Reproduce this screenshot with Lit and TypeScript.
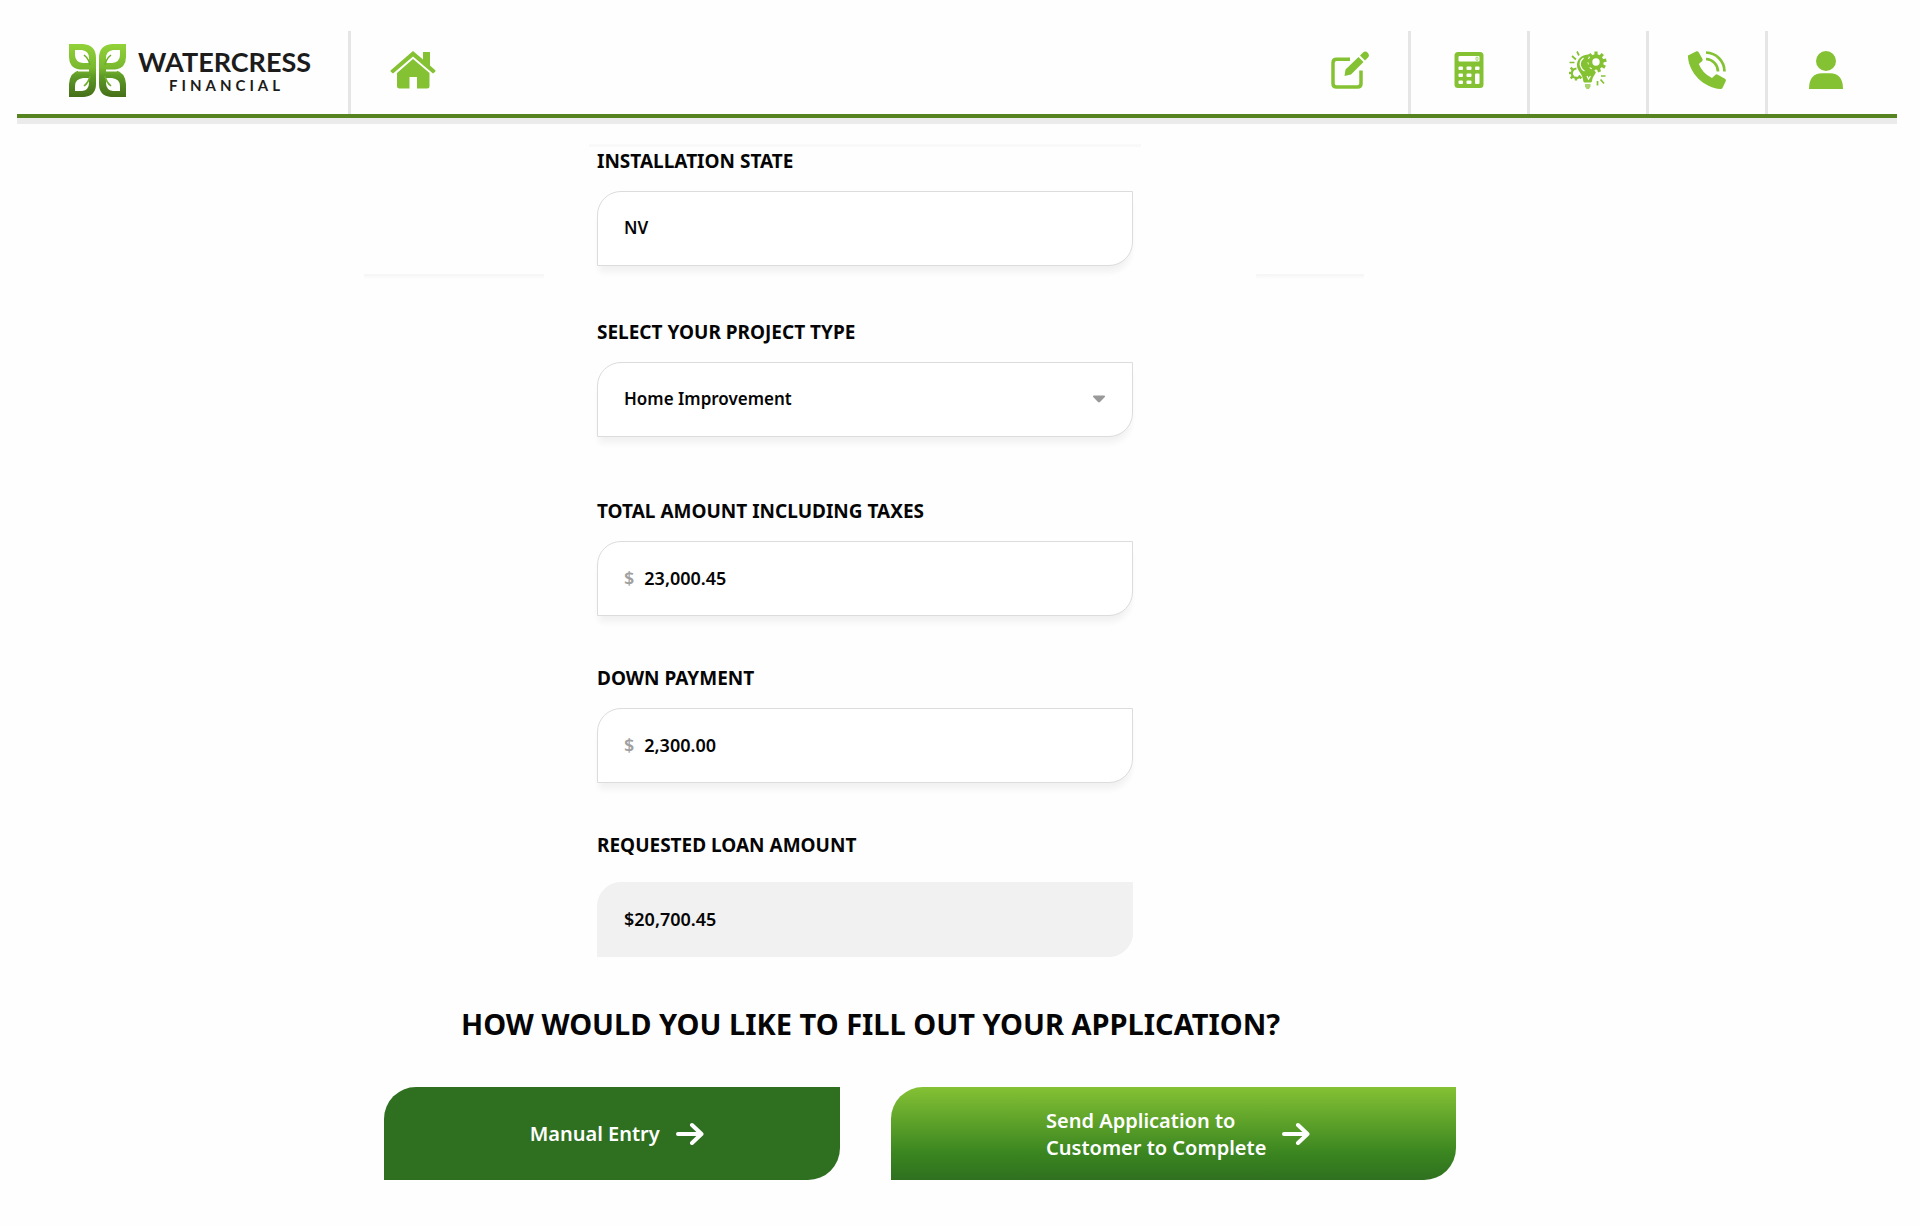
import { LitElement, html, css, svg } from "lit";
import { customElement, state } from "lit/decorators.js";

const gearTeeth = (cx: number, cy: number, r: number, w: number, count: number) =>
  Array.from({ length: count }, (_, i) => svg`
    <rect x=${cx - w / 2} y=${cy - r} width=${w} height=${r / 2}
      transform="rotate(${(360 / count) * i} ${cx} ${cy})" />`);

const logoMark = html`
  <svg class="mark" viewBox="0 0 57 53" aria-hidden="true">
    <defs>
      <linearGradient id="leaf" x1="0" y1="0" x2="0" y2="53" gradientUnits="userSpaceOnUse">
        <stop offset="0" stop-color="#92d238" />
        <stop offset="0.45" stop-color="#7ab82f" />
        <stop offset="0.6" stop-color="#5f9c27" />
        <stop offset="1" stop-color="#456f18" />
      </linearGradient>
    </defs>
    ${[0, 1].map((i) => svg`
      <g transform=${i ? "translate(57 0) scale(-1 1)" : ""}>
        <path fill="url(#leaf)" d="M0 0H14Q27 1 27 14V40Q27 52 15 53H0V40Q1 28 11 26Q0 24 0 13Z" />
        <path fill="#fff" d="M6 6H13Q20 7 20 14V19H14Q6 18 6 11ZM6 47H13Q20 46 20 39V34H14Q6 35 6 42ZM9 25.500H20V27.500H9Z" />
        <path fill="none" stroke="#6fae2c" stroke-width="1.6" d="M15 11Q20 15 21 21M15 42Q20 38 21 32" />
      </g>`)}
  </svg>`;

const homeIcon = html`
  <svg class="icon home" viewBox="0 0 46 38" aria-hidden="true">
    <path d="M23 0L33 8.500V1H40V14.500L45.500 19.500Q46 20.500 43 22.500L23 5.500L3 22.500Q0 20.500 .5 19.500Z" />
    <path d="M23 8L39.500 22V35Q39.500 37.500 37 37.500H27V26H19.500V37.500H9.500Q7 37.500 7 35V22Z" />
  </svg>`;

const editIcon = html`
  <svg class="icon" viewBox="0 0 38 38" aria-hidden="true">
    <path fill="none" stroke="currentColor" stroke-width="3.500" d="M19 8.300H5.500Q2 8.300 2 12V32.500Q2 36 5.500 36H26.500Q30 36 30 32.500V19.500" />
    <path d="M27.500 6L32.500 11L20 23.500L13.500 25L14.500 18.500ZM29 4.500L32 1.500Q34.500-.5 36.700 1.700Q39 4 37 6.500L34 9.500Z" />
  </svg>`;

const calculatorIcon = html`
  <svg class="icon" viewBox="0 0 38 38" aria-hidden="true">
    <rect x="4.500" y="1" width="29" height="36" rx="3.500" />
    <g fill="#fff">
      <rect x="8.500" y="5" width="21" height="5.500" rx="1" />
      <rect x="8.500" y="15.500" width="4.500" height="3.500" rx="1" />
      <rect x="16.500" y="15.500" width="5" height="3.500" rx="1" />
      <rect x="25" y="15.500" width="4.500" height="3.500" rx="1" />
      <rect x="8.500" y="22.500" width="4.500" height="3.500" rx="1" />
      <rect x="16.500" y="22.500" width="5" height="3.500" rx="1" />
      <rect x="8.500" y="29.500" width="4.500" height="3.500" rx="1" />
      <rect x="16.500" y="29.500" width="5" height="3.500" rx="1" />
      <rect x="25" y="22.500" width="4.500" height="10.500" rx="1" />
    </g>
    <rect x="26" y="6" width="2" height="3.500" rx="1" fill="none" stroke="currentColor" stroke-width=".7" />
  </svg>`;

const ideaIcon = html`
  <svg class="icon" viewBox="0 0 38 38" aria-hidden="true">
    <path d="M20 3.500C12 3.500 7.500 9 8 15C8.500 20 13 22 14 28.500C14.200 31 15 31.500 16 31.500H21C22.500 31.500 23 31 23.200 29C24 25 26 24 27 21L19 16Z" />
    <path d="M16 33H21.500V35.500L20 38H17.500L16 35.500Z" opacity=".7" />
    <path fill="none" stroke="#fff" stroke-width="1.200" d="M14.500 7Q9.500 11 12 16Q13 19 15.500 20M18 25L19.500 28L21.500 25" />
    <circle cx="27" cy="11" r="8.500" fill="#fff" />
    ${gearTeeth(27, 11, 10.5, 3.2, 9)}
    <circle cx="27" cy="11" r="5.700" fill="#fff" stroke="currentColor" stroke-width="4" />
    ${gearTeeth(7, 22, 7.5, 2.4, 8).slice(3)}
    <path fill="none" stroke="currentColor" stroke-width="2.200" d="M7.500 17.500A4.800 4.800 0 1 0 11.500 25" />
    <path fill="none" stroke="currentColor" stroke-width="1.700" d="M3 5L7 8.500M.5 11.500H5.500M8 .5L10 4.500M28.500 30V34.500M31.500 28.500L35 32.500M32 25H36.500" />
  </svg>`;

const phoneIcon = html`
  <svg class="icon" viewBox="0 0 38 38" aria-hidden="true">
    <path d="M0 4.500L8.500 .3Q10 0 10.700 1.200L14.500 8Q15 9.300 14 10.200L10.800 13Q14.500 22.500 24 27L27.500 23.800Q28.500 23 29.800 23.700L37 27.800Q38.200 28.500 37.800 30L34.500 37Q34 38 32.500 38C16 37 1 22 0 6Z" />
    <path fill="none" stroke="currentColor" stroke-width="2.700" d="M18 1.500A19 19 0 0 1 36.500 20.500M18 8A12.500 12.500 0 0 1 30 20.500" />
  </svg>`;

const userIcon = html`
  <svg class="icon" viewBox="0 0 38 38" aria-hidden="true">
    <circle cx="19" cy="10" r="10" />
    <path d="M2 38Q2 22.300 15 22.300H23Q36 22.300 36 38Z" />
  </svg>`;

const arrowIcon = html`
  <svg class="arrow" viewBox="0 0 28 24" aria-hidden="true">
    <path d="M2 12H25M16 3L25.500 12L16 21" />
  </svg>`;

@customElement("app-root")
export class AppRoot extends LitElement {
  @state() private total = "23,000.45";
  @state() private down = "2,300.00";

  static styles = css`
    :host {
      display: block;
      min-height: 100vh;
      background: #fefefe;
      color: #050505;
      font-family: "Noto Sans", "Open Sans", sans-serif;
    }
    * { box-sizing: border-box; }

    .header {
      display: flex;
      margin: 0 23px 0 17px;
      padding: 31px 13px 0 52px;
      border-bottom: 4px solid #568420;
      box-shadow: 0 6px 0 #ebebeb;
    }
    .brand {
      display: flex;
      align-items: center;
      gap: 12px;
      height: 83px;
      width: 279px;
      padding-bottom: 4px;
      color: #1c1c1c;
      text-decoration: none;
    }
    .mark { width: 57px; height: 53px; }
    .wordmark {
      display: flex;
      flex-direction: column;
      align-items: center;
      font-family: Lato, sans-serif;
      font-weight: 700;
    }
    .name { font-size: 27px; line-height: 28px; }
    .sub {
      padding-left: 4px;
      font-size: 15px;
      line-height: 18px;
      letter-spacing: 4px;
    }
    .nav { display: flex; flex: 1; }
    .nav-link {
      display: flex;
      align-items: center;
      justify-content: center;
      width: 119px;
      padding-bottom: 5px;
      border-left: 3px solid #e5e5e5;
      color: #84c233;
    }
    .nav-link.first { margin-right: auto; padding-left: 8px; }
    .nav-link.plain { border-left-color: transparent; }
    .icon { width: 38px; height: 38px; fill: currentColor; }
    .icon.home { width: 46px; }

    .page {
      display: grid;
      grid-template-columns: 364fr 1092fr 464fr;
      padding-top: 26px;
    }
    .content { grid-column: 2; }
    .form {
      display: grid;
      grid-template-columns: 180fr 53fr 536fr 123fr 108fr 92fr;
    }
    .edge {
      grid-column: 3;
      height: 3px;
      margin: 0 -8px;
      background: #f9f9f9;
    }
    .wing {
      align-self: end;
      grid-row: 2;
      height: 8px;
      background: linear-gradient(#f5f5f5, #fefefe 70%);
    }
    .wing.left { grid-column: 1; }
    .wing.right { grid-column: 5; }
    .field { grid-column: 3; padding-bottom: 48px; }
    .field.state { grid-row: 2; padding-bottom: 16px; }
    .field.project { padding: 36px 0 60px; }
    .field.loan { padding-bottom: 0; }
    .label {
      display: block;
      margin-bottom: 16px;
      font-size: 19px;
      line-height: 28px;
      font-weight: 700;
    }
    .field.loan .label { margin-bottom: 23px; }
    .box {
      display: flex;
      align-items: center;
      gap: 10px;
      height: 75px;
      padding: 0 26px 2px;
      border: 1px solid #dcdcdc;
      border-radius: 24px 0 24px 0;
      background: #fff;
      box-shadow: 0 8px 6px -2px #f1f1f1;
      font-size: 17px;
      font-weight: 600;
    }
    .box.amount { font-size: 18px; }
    .box.filled {
      border-color: #f1f1f1;
      background: #f1f1f1;
      box-shadow: none;
    }
    .input {
      flex: 1;
      min-width: 0;
      height: 100%;
      padding: 0;
      border: 0;
      outline: 0;
      appearance: none;
      background: transparent;
      color: inherit;
      font: inherit;
    }
    .currency { color: #a0a0a0; }
    .caret { width: 14px; height: 8px; fill: #999; }

    .question {
      margin: 44px 0 40px 97px;
      font-size: 29px;
      line-height: 46px;
      font-weight: 700;
      white-space: nowrap;
    }
    .actions {
      display: grid;
      grid-template-columns: 456fr 564fr;
      gap: 51px;
      padding-left: 20px;
    }
    .action {
      display: flex;
      align-items: center;
      justify-content: center;
      gap: 16px;
      height: 93px;
      padding: 0 0 0 9px;
      border: 0;
      border-radius: 32px 0 32px 0;
      background: #2f7020;
      color: #fff;
      font-family: inherit;
      font-size: 20px;
      line-height: 27px;
      font-weight: 600;
      text-align: left;
    }
    .action.send {
      background: linear-gradient(#84c134, #3a8520 72%, #2f701f);
    }
    .arrow {
      width: 28px;
      height: 24px;
      fill: none;
      stroke: #fff;
      stroke-width: 4;
      stroke-linecap: round;
      stroke-linejoin: round;
    }
  `;

  private get loan() {
    const value = (s: string) => Number(s.replace(/,/g, "")) || 0;
    return "$" + (value(this.total) - value(this.down)).toLocaleString("en-US", {
      minimumFractionDigits: 2,
      maximumFractionDigits: 2,
    });
  }

  render() {
    return html`
      <header class="header">
        <a class="brand" href="#">
          ${logoMark}
          <span class="wordmark">
            <span class="name">WATERCRESS</span>
            <span class="sub">FINANCIAL</span>
          </span>
        </a>
        <nav class="nav">
          <a class="nav-link first" href="#home" aria-label="Home">${homeIcon}</a>
          <a class="nav-link plain" href="#apply" aria-label="Apply">${editIcon}</a>
          <a class="nav-link" href="#calculator" aria-label="Calculator">${calculatorIcon}</a>
          <a class="nav-link" href="#ideas" aria-label="Ideas">${ideaIcon}</a>
          <a class="nav-link" href="#contact" aria-label="Contact">${phoneIcon}</a>
          <a class="nav-link" href="#account" aria-label="Account">${userIcon}</a>
        </nav>
      </header>
      <main class="page">
        <div class="content">
          <form class="form">
            <div class="edge"></div>
            <div class="wing left"></div>
            <div class="wing right"></div>
            <div class="field state">
              <label class="label" for="state">INSTALLATION STATE</label>
              <div class="box"><input class="input" id="state" type="text" .value=${"NV"} /></div>
            </div>
            <div class="field project">
              <label class="label" for="project">SELECT YOUR PROJECT TYPE</label>
              <div class="box">
                <select class="input" id="project"><option>Home Improvement</option></select>
                <svg class="caret" viewBox="0 0 14 8" aria-hidden="true"><path d="M1.500 .5H12.500Q13.500 1 12.800 2L8 7Q7 7.800 6 7L1.200 2Q.5 1 1.500 .5Z" /></svg>
              </div>
            </div>
            <div class="field">
              <label class="label" for="total">TOTAL AMOUNT INCLUDING TAXES</label>
              <div class="box amount">
                <span class="currency">$</span>
                <input class="input" id="total" type="text" .value=${this.total}
                  @input=${(e: Event) => (this.total = (e.target as HTMLInputElement).value)} />
              </div>
            </div>
            <div class="field">
              <label class="label" for="down">DOWN PAYMENT</label>
              <div class="box amount">
                <span class="currency">$</span>
                <input class="input" id="down" type="text" .value=${this.down}
                  @input=${(e: Event) => (this.down = (e.target as HTMLInputElement).value)} />
              </div>
            </div>
            <div class="field loan">
              <label class="label" for="loan">REQUESTED LOAN AMOUNT</label>
              <div class="box amount filled"><input class="input" id="loan" type="text" readonly .value=${this.loan} /></div>
            </div>
          </form>
          <h1 class="question">HOW WOULD YOU LIKE TO FILL OUT YOUR APPLICATION?</h1>
          <div class="actions">
            <button class="action" type="button"><span>Manual Entry</span>${arrowIcon}</button>
            <button class="action send" type="button"><span>Send Application to<br />Customer to Complete</span>${arrowIcon}</button>
          </div>
        </div>
      </main>
    `;
  }
}
